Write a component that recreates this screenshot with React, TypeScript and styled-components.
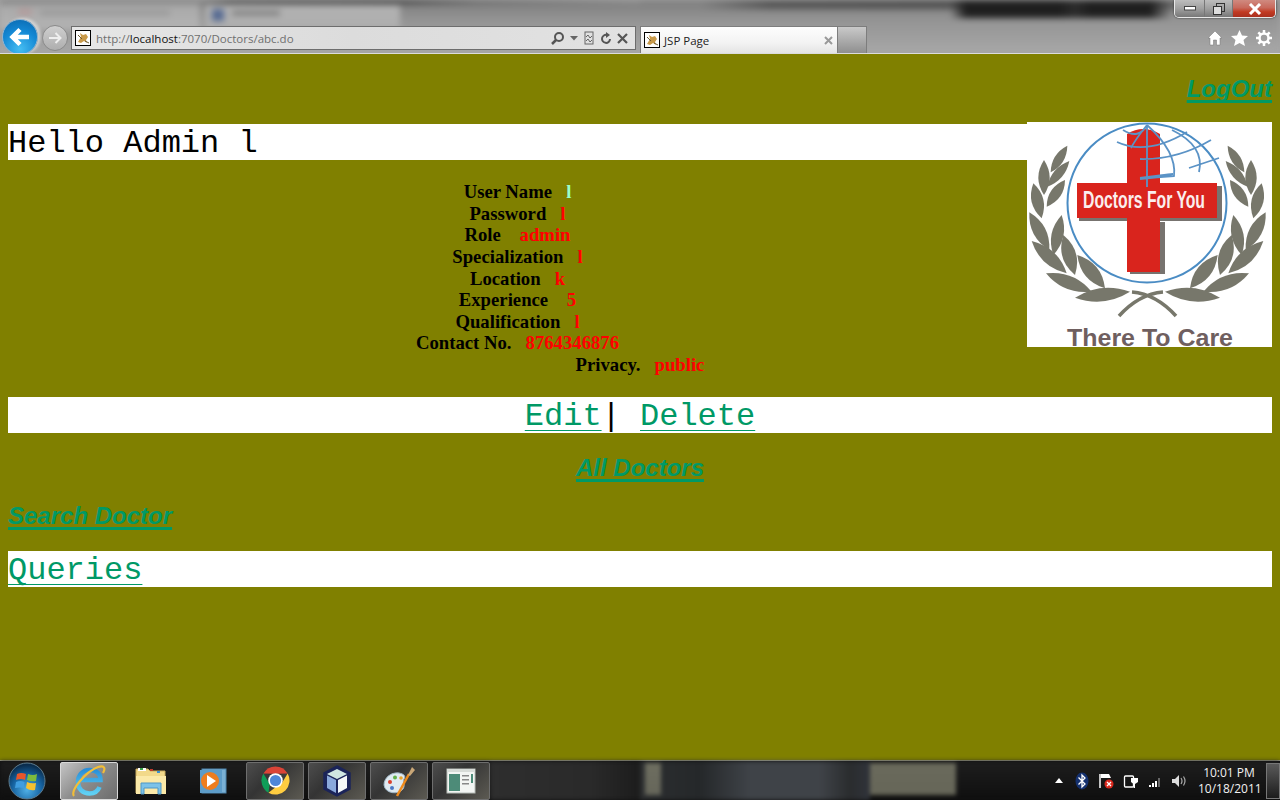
import React from "react";
import styled, { createGlobalStyle } from "styled-components";

const Global = createGlobalStyle`
  html, body { margin: 0; padding: 0; height: 100%; overflow: hidden; }
  #root { height: 100%; }
`;

const Screen = styled.div`
  width: 1280px; height: 800px; display: flex; flex-direction: column; overflow: hidden;
`;

/* ---------- browser chrome ---------- */
const Chrome = styled.header`
  height: 54px; flex: none; display: flex; flex-direction: column; box-sizing: border-box;
  border-bottom: 1px solid #dcdcdc; position: relative; overflow: hidden; background: #a4a4a4;
  &::before {
    content: ""; position: absolute; inset: 0; filter: blur(3px);
    background:
      linear-gradient(#566a92, #566a92) 212px 9px / 12px 12px no-repeat,
      linear-gradient(#767676, #767676) 232px 11px / 48px 4px no-repeat,
      linear-gradient(#b39a9a, #b39a9a) 18px 9px / 14px 6px no-repeat,
      linear-gradient(#959595, #959595) 40px 11px / 130px 4px no-repeat,
      linear-gradient(90deg, #808080 0, #808080 200px, #4a4a4a 230px, #3a3a3a 400px, #6a6a6a 480px, #8a8a8a 640px) 0 0 / 640px 4px no-repeat,
      linear-gradient(#b2b2b2, #aeaeae) 205px 5px / 195px 24px no-repeat,
      linear-gradient(#a8a8a8, #b4b4b4) 0 4px / 200px 26px no-repeat,
      linear-gradient(90deg, rgba(34,34,34,0) 950px, #1f1f1f 966px, #1f1f1f 1060px, #2c2c2c 1075px, #1f1f1f 1090px, #1f1f1f 1150px, rgba(34,34,34,0) 1172px) 0 0 / 100% 18px no-repeat,
      linear-gradient(90deg, rgba(70,70,70,0) 700px, #555 770px, #505050 960px, #666 1175px, #888 1280px) 0 0 / 100% 9px no-repeat,
      linear-gradient(180deg, #7c7c7c 0, #949494 20px, #a8a8a8 54px);
  }
  & > * { position: relative; }
`;
const TitleRow = styled.div`
  height: 26px; flex: none; display: flex; justify-content: flex-end; padding-right: 4px;
`;
const WindowControls = styled.div`
  height: 18px; width: 102px; display: flex; box-sizing: border-box; border: 1px solid #e8e8e8; border-top: 0;
  border-radius: 0 0 5px 5px; overflow: hidden; box-shadow: 0 0 2px #222;
`;
const WinBtn = styled.div<{ $w: number; $close?: boolean }>`
  width: ${(p) => p.$w}px; flex: none; display: flex; align-items: center; justify-content: center;
  border-right: 1px solid #777;
  background: ${(p) =>
    p.$close
      ? "linear-gradient(180deg,#d08a80 0%,#c8695c 45%,#c23a22 70%,#a9301f 100%)"
      : "linear-gradient(180deg,#bdbdbd 0%,#a0a0a0 50%,#787878 100%)"};
`;
const ToolRow = styled.div`
  flex: 1; display: flex; align-items: stretch;
`;
const BackButton = styled.div`
  width: 36px; height: 36px; flex: none; border-radius: 50%; margin: -7px 0 0 2px; box-sizing: border-box;
  border: 1px solid #8fb4d2; box-shadow: 3px -1px 3px rgba(225,225,225,.7);
  background: radial-gradient(circle at 50% 85%, #45bdf2 0%, #1488d4 55%, #0a66ac 100%);
  display: flex; align-items: center; justify-content: center; z-index: 1;
`;
const ForwardButton = styled.div`
  width: 26px; height: 26px; flex: none; border-radius: 50%; margin: -1px 0 0 4px; box-sizing: border-box;
  border: 1px solid #8a8a8a; background: linear-gradient(180deg,#cfcfcf,#aeaeae);
  display: flex; align-items: center; justify-content: center;
`;
const AddressBar = styled.div`
  width: 565px; height: 24px; flex: none; margin-left: 3px; box-sizing: border-box;
  border: 1px solid #6d6d6d; display: flex; align-items: center; padding: 0 7px 0 3px;
  background: linear-gradient(90deg,#e6e6e6 0%,#dcdcdc 50%,#e2e2e2 100%);
`;
const Url = styled.span`
  font: 11.5px "Open Sans", sans-serif; color: #6f6f6f; margin-left: 5px; flex: 1; white-space: nowrap;
`;
const UrlHost = styled.span`
  color: #111;
`;
const AddrTools = styled.div`
  display: flex; align-items: center; gap: 5px;
`;
const Tab = styled.div`
  width: 198px; height: 27px; flex: none; margin-left: 4px; box-sizing: border-box;
  border: 1px solid #7d7d7d; border-bottom: 0; display: flex; align-items: center; padding: 0 4px 0 3px;
  background: linear-gradient(180deg,#fdfdfd 0%,#f3f3f3 60%,#e4e4e4 100%);
`;
const TabTitle = styled.span`
  font: 11.5px "Open Sans", sans-serif; color: #222; margin-left: 4px; flex: 1;
`;
const NewTab = styled.div`
  width: 29px; height: 27px; flex: none; box-sizing: border-box; border: 1px solid #7d7d7d; border-width: 1px 1px 0 0;
  background: linear-gradient(180deg,#c9c9c9,#8f8f8f);
`;
const ToolIcons = styled.div`
  margin-left: auto; padding-right: 8px; display: flex; align-items: center; gap: 8px; height: 24px;
`;

/* ---------- page ---------- */
const Page = styled.main`
  flex: 1; background: #808000; padding: 0 8px; overflow: hidden;
  font-family: "Liberation Serif", "Times New Roman", serif;
`;
const BoldLink = styled.a`
  font: italic bold 24px/28px "Liberation Sans", Arial, sans-serif; color: #009966; text-decoration: underline;
  text-decoration-thickness: 3px; text-underline-offset: 3px; text-decoration-skip-ink: none;
`;
const LinkRow = styled.div<{ $align: string; $top: number }>`
  text-align: ${(p) => p.$align}; margin-top: ${(p) => p.$top}px; height: 28px;
`;
const WhiteBar = styled.div<{ $top: number; $align?: string }>`
  background: #fff; height: 36px; margin-top: ${(p) => p.$top}px; text-align: ${(p) => p.$align || "left"};
  font: 32px/40px "Liberation Mono", "Courier New", monospace; color: #000;
`;
const MonoLink = styled.a`
  color: #009966; text-decoration: underline; text-decoration-thickness: 1px; text-underline-offset: 5px;
  text-decoration-skip-ink: none;
`;
const Logo = styled.svg`
  float: right; width: 245px; height: 225px; margin-top: -2px; background: #fff; display: block; overflow: visible;
`;
const Details = styled.div`
  margin-top: 21.2px; font-size: 18.72px; line-height: 21.6px; font-weight: bold; text-align: center; color: #000;
`;
const DetailRow = styled.div``;
const Value = styled.span<{ $pale?: boolean }>`
  color: ${(p) => (p.$pale ? "#99ffcc" : "#ff0000")};
`;

/* ---------- taskbar ---------- */
const Taskbar = styled.footer`
  height: 40px; flex: none; display: flex; align-items: center; box-sizing: border-box;
  border-top: 1px solid #a8a890; padding-left: 60px; position: relative; background: #101010;
  &::before {
    content: ""; position: absolute; inset: 0; filter: blur(2px);
    background:
      linear-gradient(#6a6a5c, #666658) 870px 2px / 86px 32px no-repeat,
      linear-gradient(#6e6e60, #66665a) 645px 2px / 16px 32px no-repeat,
      linear-gradient(90deg, #2c2e30 0, #25282a 60px, #3f4348 110px, #3f4348 180px, #2a2c2e 210px, #30333a 230px) 640px 0 / 230px 100% no-repeat,
      linear-gradient(90deg, #2e2e2e 0, #2a2a2a 100px, #1c1c1c 150px) 490px 0 / 150px 100% no-repeat,
      linear-gradient(180deg, #1e1e1e, #0f0f0f);
  }
  & > * { position: relative; }
`;
const StartOrb = styled.div`
  position: absolute !important; left: 8px; top: 1px; width: 38px; height: 38px;
`;
const TaskButton = styled.div<{ $state: "active" | "open" | "plain" }>`
  width: 58px; height: 38px; flex: none; margin-right: 4px; box-sizing: border-box; border-radius: 2px;
  display: flex; align-items: center; justify-content: center;
  border: 1px solid ${(p) => (p.$state === "active" ? "#d8d8d8" : p.$state === "open" ? "#6e6e6e" : "transparent")};
  background: ${(p) =>
    p.$state === "active"
      ? "linear-gradient(135deg,#c4c4c4 0%,#8e8e8e 45%,#6c6c6c 100%)"
      : p.$state === "open"
        ? "linear-gradient(135deg,#4d4d4d 0%,#343434 40%,#5c5a52 100%)"
        : "none"};
`;
const Tray = styled.div`
  margin-left: auto; display: flex; align-items: center; height: 100%;
`;
const TrayIcons = styled.div`
  display: flex; align-items: center; gap: 9px;
`;
const Clock = styled.div`
  width: 62px; margin-left: 11px; text-align: center; color: #f2f2f2; font: 12px/16px "Open Sans", sans-serif; white-space: nowrap;
`;
const ShowDesktop = styled.div`
  width: 14px; height: 36px; margin-left: 6px; box-sizing: border-box; border: 1px solid #777;
  background: linear-gradient(180deg,#5a5a5a,#1c1c1c);
`;

/* ---------- icons ---------- */
const TomcatFav = () => (
  <svg width="16" height="16" viewBox="0 0 16 16">
    <rect x=".5" y=".5" width="15" height="15" fill="#fff" stroke="#000" />
    <path d="M3 12 L6 7 L5 3 L8 5 L11 4 L13 7 L11 10 L12 13 L9 11 L6 13Z" fill="#c99a4a" />
    <path d="M3 5 L7 9 M10 11 L14 13" stroke="#6b5a33" />
  </svg>
);

type Leaf = [number, number, number, number, number];
const LEAVES: Leaf[] = [
  [142, 92, 92, 172, 14], [72, 135, 72, 240, 17], [148, 138, 82, 215, 14], [40, 205, 65, 310, 18],
  [135, 195, 80, 275, 16], [28, 292, 88, 405, 19], [125, 300, 100, 420, 18], [35, 378, 140, 475, 20],
  [130, 360, 165, 480, 21], [78, 475, 215, 530, 20], [172, 420, 255, 520, 21], [165, 548, 330, 530, 20],
];
const leafPath = ([a, b, c, d, w]: Leaf) => {
  const x1 = (a - 21) / 3, y1 = (b - 21) / 3, x2 = (c - 21) / 3, y2 = (d - 21) / 3;
  const mx = (x1 + x2) / 2, my = (y1 + y2) / 2, dx = x2 - x1, dy = y2 - y1;
  const l = Math.hypot(dx, dy), nx = (-dy / l) * (w / 1.5), ny = (dx / l) * (w / 1.5);
  return `M${x1} ${y1}Q${mx + nx} ${my + ny} ${x2} ${y2}Q${mx - nx} ${my - ny} ${x1} ${y1}Z`;
};

const LogoArt = () => (
  <Logo viewBox="0 0 245 225">
    <g fill="#77776b">
      {LEAVES.map((l, i) => <path key={i} d={leafPath(l)} />)}
      <g transform="translate(241 0) scale(-1 1)">
        {LEAVES.map((l, i) => <path key={i} d={leafPath(l)} />)}
      </g>
    </g>
    <path d="M92 194 Q112 172 136 170 M149 194 Q129 172 105 170" fill="none" stroke="#77776b" strokeWidth="3.5" />
    <path d="M52 64h143v35h-143zM103 100h35v52h-35z" fill="#77736f" />
    <path d="M100 12Q116 2 133 12V61h57v35h-57v54h-33v-54h-50v-35h50z" fill="#d9241d" />
    <circle cx="120" cy="81" r="79.500" fill="none" stroke="#4a8cc4" strokeWidth="2" />
    <g fill="none" stroke="#5b93c6" strokeWidth="1.8">
      <path d="M120 3V65M90 20Q120 34 160 10M113 37Q150 38 184 18M113 56Q145 52 146 52M120 3Q150 30 147 54Q130 55 113 57M96 8Q112 18 120 3Q108 18 104 26M145 8Q178 24 172 50M162 46L192 36" />
    </g>
    <text x="56" y="86" fontFamily="'Liberation Sans', Arial, sans-serif" fontSize="23" fontWeight="bold" fill="#fbeeee" textLength="122" lengthAdjust="spacingAndGlyphs">Doctors For You</text>
    <text x="40" y="224" fontFamily="'Liberation Sans', Arial, sans-serif" fontSize="24" fontWeight="bold" fill="#6f5f5f" textLength="166" lengthAdjust="spacingAndGlyphs">There To Care</text>
  </Logo>
);

const Orb = () => (
  <svg width="38" height="38" viewBox="0 0 38 38">
    <defs>
      <radialGradient id="orb" cx="50%" cy="75%" r="70%">
        <stop offset="0" stopColor="#4fb0e6" />
        <stop offset=".6" stopColor="#15619f" />
        <stop offset="1" stopColor="#0a2c4c" />
      </radialGradient>
    </defs>
    <circle cx="19" cy="19" r="18" fill="url(#orb)" stroke="#5d7b8d" />
    <path d="M9 12Q13 10 18 12L17 18Q13 16 8 18Z" fill="#e8562a" />
    <path d="M20 12Q25 14 29 12L28 19Q24 20 19 18Z" fill="#7dbb3c" />
    <path d="M8 20Q12 18 16.500 20L16 26Q11 25 7 26Z" fill="#3f9de0" />
    <path d="M19 20Q23 22 28 21L27 28Q22 29 18 26Z" fill="#f6c12f" />
  </svg>
);
const IEIcon = () => (
  <svg width="36" height="34" viewBox="0 0 36 34">
    <defs>
      <linearGradient id="ieblue" x1="0" y1="0" x2="0" y2="1">
        <stop offset="0" stopColor="#2a8fd8" />
        <stop offset="1" stopColor="#5fd0f4" />
      </linearGradient>
    </defs>
    <path d="M7 16H29.500C29.500 9.500 25 6 18.500 6C11.500 6 7 11.500 7 18C7 25 12 29.500 18.500 29.500C23.500 29.500 27 27 28.500 23" fill="none" stroke="url(#ieblue)" strokeWidth="4.500" />
    <path d="M3 32C-1 27 14 8 27 3C33 1 35 4 32 9" fill="none" stroke="#f0bd3a" strokeWidth="2.200" />
  </svg>
);
const FolderIcon = () => (
  <svg width="32" height="30" viewBox="0 0 32 30">
    <path d="M1 3h12l2 2h15v22H1z" fill="#f2d98a" stroke="#c9ab5e" />
    <rect x="3" y="2" width="8" height="3" fill="#fff" />
    <rect x="5" y="2" width="3" height="2" fill="#39a24a" />
    <rect x="15" y="3" width="3" height="2" fill="#c0392b" />
    <rect x="22" y="5" width="3" height="2" fill="#3a8fd0" />
    <path d="M1 10h30v18H1z" fill="#fbe9a8" />
    <path d="M6 17h20v11h-3v-6h-14v6h-3z" fill="#7cc2e8" stroke="#4e97c6" />
  </svg>
);
const MediaIcon = () => (
  <svg width="28" height="28" viewBox="0 0 28 28">
    <rect x="3" y="2" width="24" height="24" fill="#7ab0d4" stroke="#4f86ad" />
    <rect x="1" y="3" width="22" height="23" fill="#5d9cc8" />
    <circle cx="11" cy="14" r="9" fill="#ee7d1e" />
    <path d="M8 8L17 14L8 20Z" fill="#fff" />
  </svg>
);
const ChromeIcon = () => (
  <svg width="29" height="29" viewBox="-15 -15 30 30">
    <path d="M-12.560 -7.250L-6 3.500L-7.250 12.560A14.500 14.500 0 0 1 -12.560 -7.250Z" fill="#0f9d58" />
    <path d="M-7.250 12.560L0 7L6 3.500L12.560 -7.250A14.500 14.500 0 0 1 -7.250 12.560Z" fill="#ffcd40" />
    <path d="M-12.560 -7.250 L0 -7 L12.560 -7.250 A14.500 14.500 0 0 0 -12.560 -7.250Z" fill="#db4437" />
    <circle r="7.500" fill="#fff" />
    <circle r="5.800" fill="#4e86d8" />
  </svg>
);
const CubeIcon = () => (
  <svg width="30" height="32" viewBox="0 0 30 32">
    <path d="M15 1L28 8V24L15 31L2 24V8Z" fill="#1b2459" stroke="#1b2459" strokeWidth="1.500" />
    <path d="M15 4L25 9L15 14L5 9Z" fill="#cfe6e2" />
    <path d="M5 10.500L14 15V28L5 23Z" fill="#8aa9dc" />
    <path d="M25 10.500L16 15V28L25 23Z" fill="#f4f7f8" />
  </svg>
);
const PaletteIcon = () => (
  <svg width="34" height="32" viewBox="0 0 34 32">
    <path d="M2 20C2 12 10 7 17 8C22 9 24 11 22 14C20 17 24 19 21 24C17 30 3 29 2 20Z" fill="#dfeaf1" stroke="#9fb6c6" />
    <circle cx="8" cy="17" r="2" fill="#d9402f" />
    <circle cx="13" cy="12.500" r="2" fill="#60b04a" />
    <circle cx="19" cy="13" r="1.800" fill="#e9a62f" />
    <circle cx="10" cy="23" r="2" fill="#4a76c4" />
    <path d="M15 31L27 9" stroke="#ee8a1c" strokeWidth="2.500" />
    <path d="M26 10L30 2L33 5L28 11Z" fill="#c9a777" />
  </svg>
);
const WindowIcon = () => (
  <svg width="30" height="26" viewBox="0 0 30 26">
    <rect x="1" y="1" width="28" height="24" fill="#f3f5f3" stroke="#b7bdb8" />
    <rect x="1" y="1" width="28" height="3" fill="#d8dcd8" />
    <rect x="3" y="6" width="11" height="17" fill="#4d8b78" />
    <rect x="16" y="7" width="7" height="1.500" fill="#888" />
    <rect x="16" y="11" width="7" height="1.500" fill="#888" />
    <rect x="16" y="15" width="7" height="1.500" fill="#888" />
    <rect x="25" y="6" width="2" height="9" fill="#4d8b78" />
  </svg>
);

const details: { label: string; value: string; gap: number; pale?: boolean }[] = [
  { label: "User Name", value: "l", gap: 3, pale: true },
  { label: "Password", value: "l", gap: 3 },
  { label: "Role", value: "admin", gap: 4 },
  { label: "Specialization", value: "l", gap: 3 },
  { label: "Location", value: "k", gap: 3 },
  { label: "Experience", value: "5", gap: 4 },
  { label: "Qualification", value: "l", gap: 3 },
  { label: "Contact No.", value: "8764346876", gap: 3 },
  { label: "Privacy.", value: "public", gap: 3 },
];

export default function App() {
  return (
    <Screen>
      <Global />
      <Chrome>
        <TitleRow>
          <WindowControls>
            <WinBtn $w={29}>
              <svg width="12" height="5"><rect x=".5" y=".5" width="11" height="3.500" fill="#fff" stroke="#444" /></svg>
            </WinBtn>
            <WinBtn $w={27}>
              <svg width="12" height="12"><rect x="3.500" y=".5" width="8" height="8" fill="none" stroke="#333" /><rect x=".5" y="3.500" width="8" height="8" fill="#ddd" stroke="#333" /></svg>
            </WinBtn>
            <WinBtn $w={44} $close>
              <svg width="14" height="12"><path d="M2 1L12 11M12 1L2 11" stroke="#fff" strokeWidth="3" /></svg>
            </WinBtn>
          </WindowControls>
        </TitleRow>
        <ToolRow>
          <BackButton>
            <svg width="24" height="24" viewBox="0 0 24 24"><path d="M21 12H5M12 4.500L4.500 12L12 19.500" fill="none" stroke="#fff" strokeWidth="4.500" /></svg>
          </BackButton>
          <ForwardButton>
            <svg width="16" height="16" viewBox="0 0 16 16"><path d="M2 8H13M8.500 3L13.500 8L8.500 13" fill="none" stroke="#eee" strokeWidth="2" /></svg>
          </ForwardButton>
          <AddressBar>
            <TomcatFav />
            <Url>http://<UrlHost>localhost</UrlHost>:7070/Doctors/abc.do</Url>
            <AddrTools>
              <svg width="15" height="15" viewBox="0 0 15 15"><circle cx="9" cy="6" r="4" fill="none" stroke="#555" strokeWidth="2" /><path d="M6 9L2 13" stroke="#555" strokeWidth="2.500" /></svg>
              <svg width="8" height="5"><path d="M0 0H8L4 4.500Z" fill="#666" /></svg>
              <svg width="12" height="14" viewBox="0 0 12 14"><rect x="2" y="1" width="8" height="12" fill="none" stroke="#666" /><path d="M3 6L5 4L7 7L9 5M3 10L5 8L7 11L9 9" fill="none" stroke="#666" /></svg>
              <svg width="12" height="13" viewBox="0 0 12 13"><path d="M10 7A4 4 0 1 1 7 3" fill="none" stroke="#555" strokeWidth="2" /><path d="M6 0L10 3L6 6Z" fill="#555" /></svg>
              <svg width="11" height="11" viewBox="0 0 11 11"><path d="M1 1L10 10M10 1L1 10" stroke="#555" strokeWidth="2.200" /></svg>
            </AddrTools>
          </AddressBar>
          <Tab>
            <TomcatFav />
            <TabTitle>JSP Page</TabTitle>
            <svg width="9" height="9" viewBox="0 0 9 9"><path d="M1 1L8 8M8 1L1 8" stroke="#999" strokeWidth="2" /></svg>
          </Tab>
          <NewTab />
          <ToolIcons>
            <svg width="16" height="16" viewBox="0 0 16 16"><path d="M8 1L1 8H3V15H6.500V10H9.500V15H13V8H15Z" fill="#fff" stroke="#777" strokeWidth=".5" /></svg>
            <svg width="17" height="16" viewBox="0 0 17 16"><path d="M8.500 0L11 5.500L17 6L12.500 10L14 16L8.500 13L3 16L4.500 10L0 6L6 5.500Z" fill="#fff" /></svg>
            <svg width="16" height="16" viewBox="0 0 16 16"><circle cx="8" cy="8" r="4.500" fill="none" stroke="#fff" strokeWidth="2.500" /><path d="M8 0V3M8 13V16M0 8H3M13 8H16M2.300 2.300L4.500 4.500M11.500 11.500L13.700 13.700M2.300 13.700L4.500 11.500M11.500 4.500L13.700 2.300" stroke="#fff" strokeWidth="2.500" /></svg>
          </ToolIcons>
        </ToolRow>
      </Chrome>

      <Page>
        <LinkRow $align="right" $top={21}><BoldLink>LogOut</BoldLink></LinkRow>
        <WhiteBar $top={21}>
          <LogoArt />
          Hello Admin l
        </WhiteBar>
        <Details>
          {details.map((d) => (
            <DetailRow key={d.label}>
              {d.label}{"\u00a0".repeat(d.gap)}<Value $pale={d.pale}>{d.value}</Value>
            </DetailRow>
          ))}
        </Details>
        <WhiteBar $top={21.4} $align="center">
          <MonoLink>Edit</MonoLink>| <MonoLink>Delete</MonoLink>
        </WhiteBar>
        <LinkRow $align="center" $top={21}><BoldLink>All Doctors</BoldLink></LinkRow>
        <LinkRow $align="left" $top={20}><BoldLink>Search Doctor</BoldLink></LinkRow>
        <WhiteBar $top={21}><MonoLink>Queries</MonoLink></WhiteBar>
      </Page>

      <Taskbar>
        <StartOrb><Orb /></StartOrb>
        <TaskButton $state="active"><IEIcon /></TaskButton>
        <TaskButton $state="plain"><FolderIcon /></TaskButton>
        <TaskButton $state="plain"><MediaIcon /></TaskButton>
        <TaskButton $state="open"><ChromeIcon /></TaskButton>
        <TaskButton $state="open"><CubeIcon /></TaskButton>
        <TaskButton $state="open"><PaletteIcon /></TaskButton>
        <TaskButton $state="open"><WindowIcon /></TaskButton>
        <Tray>
          <TrayIcons>
            <svg width="11" height="5"><path d="M0 5L4 0L8 5Z" fill="#fff" /></svg>
            <svg width="14" height="18" viewBox="0 0 14 18"><ellipse cx="7" cy="9" rx="6.500" ry="8.500" fill="#14306e" /><path d="M3.500 5.500L10 12L7 15V3L10 6L3.500 12.500" fill="none" stroke="#fff" strokeWidth="1.300" /></svg>
            <svg width="16" height="16" viewBox="0 0 16 16"><path d="M2 1V15" stroke="#fff" strokeWidth="1.500" /><path d="M3 1H11L13 5H3Z" fill="#fff" /><circle cx="11" cy="11" r="4.500" fill="#d9281d" /><path d="M9 9L13 13M13 9L9 13" stroke="#fff" strokeWidth="1.300" /></svg>
            <svg width="16" height="16" viewBox="0 0 16 16"><rect x="1.500" y="3" width="9" height="11" rx="1" fill="none" stroke="#fff" strokeWidth="1.300" /><path d="M9 1V5M13 1V5M8 5H15V9L12 11V15H10.500V11L8 9Z" fill="#fff" /></svg>
            <svg width="14" height="14" viewBox="0 0 14 14"><path d="M1 11h2v2h-2zM4 9h2v4h-2zM7 7h2v6h-2z" fill="#fff" /><path d="M10 4h2v9h-2z" fill="#666" /></svg>
            <svg width="16" height="14" viewBox="0 0 16 14"><path d="M1 5H4L8 1V13L4 9H1Z" fill="#ddd" /><path d="M10 4Q12 7 10 10M12.500 2.500Q15.500 7 12.500 11.500" fill="none" stroke="#aaa" strokeWidth="1.200" /></svg>
          </TrayIcons>
          <Clock>10:01 PM<br />10/18/2011</Clock>
          <ShowDesktop />
        </Tray>
      </Taskbar>
    </Screen>
  );
}
